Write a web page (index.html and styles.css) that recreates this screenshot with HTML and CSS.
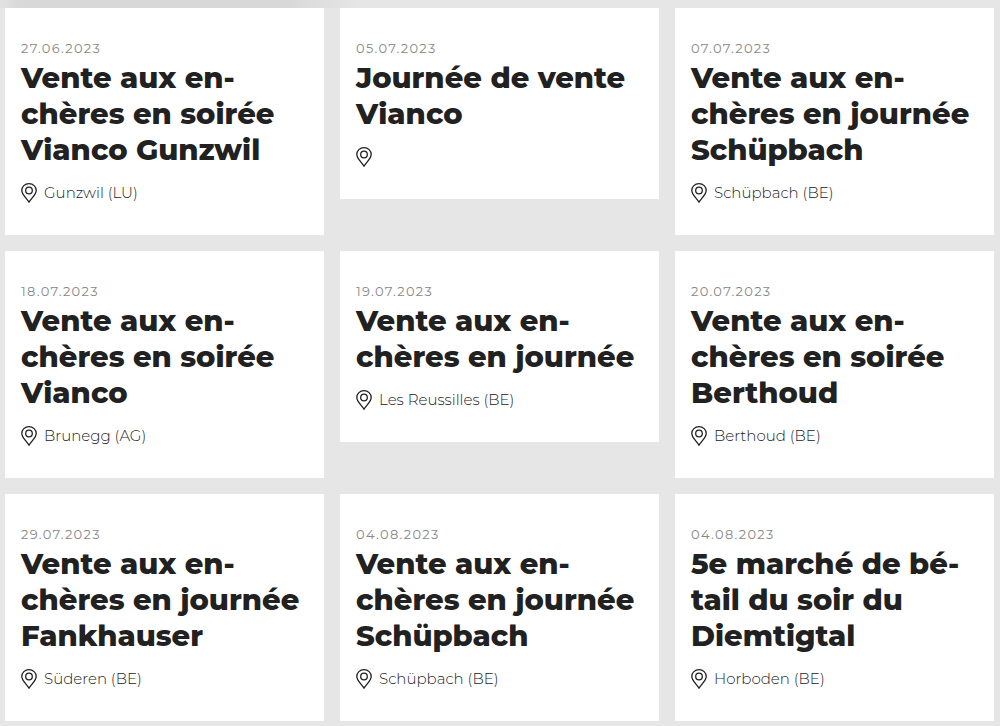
FILE: index.html
```html
<!DOCTYPE html>
<html lang="fr">
<head>
<meta charset="utf-8">
<meta name="viewport" content="width=device-width, initial-scale=1">
<title>Agenda</title>
<link rel="stylesheet" href="styles.css">
</head>
<body>
<svg class="sprite" aria-hidden="true"><symbol id="pin" viewBox="0 0 16 20"><path d="M8 .7C3.900.7.8 3.600.8 7.400c0 4.100 4.300 7.100 7.200 11.700 2.900-4.600 7.200-7.600 7.200-11.700C15.200 3.600 12.100.7 8 .7z"/><circle cx="8" cy="7.500" r="3.300"/></symbol></svg>
<main class="events">
<article class="card"><time class="date">27.06.2023</time><h2 class="title">Vente aux en-<br>chères en soirée<br>Vianco Gunzwil</h2><p class="place"><svg class="pin"><use href="#pin"/></svg>Gunzwil (LU)</p></article>
<article class="card"><time class="date">05.07.2023</time><h2 class="title">Journée de vente<br>Vianco</h2><p class="place"><svg class="pin"><use href="#pin"/></svg></p></article>
<article class="card"><time class="date">07.07.2023</time><h2 class="title">Vente aux en-<br>chères en journée<br>Schüpbach</h2><p class="place"><svg class="pin"><use href="#pin"/></svg>Schüpbach (BE)</p></article>
<article class="card"><time class="date">18.07.2023</time><h2 class="title">Vente aux en-<br>chères en soirée<br>Vianco</h2><p class="place"><svg class="pin"><use href="#pin"/></svg>Brunegg (AG)</p></article>
<article class="card"><time class="date">19.07.2023</time><h2 class="title">Vente aux en-<br>chères en journée</h2><p class="place"><svg class="pin"><use href="#pin"/></svg>Les Reussilles (BE)</p></article>
<article class="card"><time class="date">20.07.2023</time><h2 class="title">Vente aux en-<br>chères en soirée<br>Berthoud</h2><p class="place"><svg class="pin"><use href="#pin"/></svg>Berthoud (BE)</p></article>
<article class="card"><time class="date">29.07.2023</time><h2 class="title">Vente aux en-<br>chères en journée<br>Fankhauser</h2><p class="place"><svg class="pin"><use href="#pin"/></svg>Süderen (BE)</p></article>
<article class="card"><time class="date">04.08.2023</time><h2 class="title">Vente aux en-<br>chères en journée<br>Schüpbach</h2><p class="place"><svg class="pin"><use href="#pin"/></svg>Schüpbach (BE)</p></article>
<article class="card"><time class="date">04.08.2023</time><h2 class="title">5e marché de bé-<br>tail du soir du<br>Diemtigtal</h2><p class="place"><svg class="pin"><use href="#pin"/></svg>Horboden (BE)</p></article>
</main>
</body>
</html>
```
FILE: styles.css
```css
* { box-sizing: border-box; }
body { margin: 0; background: #e6e6e6; color: #212121; font-family: Montserrat, Inter, sans-serif; }
.sprite { display: none; }
.events { display: grid; grid-template-columns: repeat(3, 1fr); gap: 16px; align-items: start; padding: 8px 6px 5px 5px; background: linear-gradient(90deg, #e2e2e2, #d8d8d8 5%, #d8d8d8 80%, #e6e6e6) no-repeat 0 0 / 36% 8px; }
.card { background: #fff; padding: 31px 16px 32px; }
.date { display: block; font-size: 13px; line-height: 18px; letter-spacing: 0.1em; font-weight: 400; color: #888; }
.title { margin: 3px 0 15px; font-size: 29px; line-height: 36px; font-weight: 800; white-space: nowrap; }
.place { display: flex; align-items: center; gap: 7px; height: 20px; margin: 0; font-size: 15px; line-height: 20px; font-weight: 300; }
.pin { flex: none; width: 16px; height: 20px; fill: none; stroke: #212121; stroke-width: 1.3; }
```
